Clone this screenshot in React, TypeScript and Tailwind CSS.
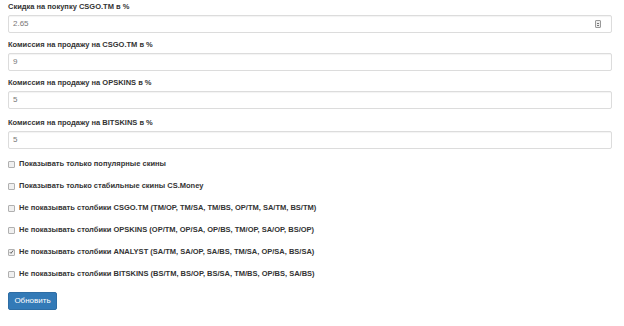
import { useState } from "react";

const FIELDS = [
  { label: "Скидка на покупку CSGO.TM в %", value: "2.65", spinner: true, gap: "mb-[7px]" },
  { label: "Комиссия на продажу на CSGO.TM в %", value: "9", gap: "mb-[7px]" },
  { label: "Комиссия на продажу на OPSKINS в %", value: "5", gap: "mb-[9px]" },
  { label: "Комиссия на продажу на BITSKINS в %", value: "5", gap: "mb-[7px]" },
];

const CHECKS = [
  { label: "Показывать только популярные скины", checked: false },
  { label: "Показывать только стабильные скины CS.Money", checked: false },
  { label: "Не показывать столбики CSGO.TM (TM/OP, TM/SA, TM/BS, OP/TM, SA/TM, BS/TM)", checked: false },
  { label: "Не показывать столбики OPSKINS (OP/TM, OP/SA, OP/BS, TM/OP, SA/OP, BS/OP)", checked: false },
  { label: "Не показывать столбики ANALYST (SA/TM, SA/OP, SA/BS, TM/SA, OP/SA, BS/SA)", checked: true },
  { label: "Не показывать столбики BITSKINS (BS/TM, BS/OP, BS/SA, TM/BS, OP/BS, SA/BS)", checked: false },
];

function Checkbox({ checked }: { checked: boolean }) {
  return (
    <span className="mr-[4px] flex h-[7px] w-[7px] shrink-0 items-center justify-center rounded-[1px] border border-[#b0b0b0] bg-[#f0f0f0]">
      {checked && (
        <svg width="6" height="6" viewBox="0 0 6 6" aria-hidden>
          <path d="M1 3.2 L2.4 4.6 L5 1.2" fill="none" stroke="#444" strokeWidth="1" />
        </svg>
      )}
    </span>
  );
}

export default function App() {
  const [checks] = useState(CHECKS);

  return (
    <div className="min-h-[326px] w-[624px] bg-white pl-[8px] pr-[12px] pt-[2px] font-['Liberation_Sans',Arial,sans-serif] text-[#333]">
      {FIELDS.map((f) => (
        <div key={f.label} className={f.gap}>
          <div className="mb-[3px] h-[10px] text-[7.5px] font-bold leading-[10px]">{f.label}</div>
          <div className="flex h-[18px] items-center justify-between rounded-[2px] border border-[#dcdcdc] px-[4px] text-[8px] text-[#777] shadow-[inset_0_1px_1px_rgba(0,0,0,0.05)]">
            <span>{f.value}</span>
            {f.spinner && (
              <span className="mr-[6px] flex h-[8px] w-[6px] flex-col items-center justify-center rounded-[1px] border border-[#999] bg-[#eee]">
                <span className="h-[1px] w-[2px] bg-[#777]" />
                <span className="mt-[1px] h-[1px] w-[2px] bg-[#777]" />
              </span>
            )}
          </div>
        </div>
      ))}

      <div className="mt-[-3px]">
        {checks.map((c) => (
          <div key={c.label} className="flex h-[22px] items-center text-[7.5px] font-bold">
            <Checkbox checked={c.checked} />
            <span>{c.label}</span>
          </div>
        ))}
      </div>

      <button className="mt-[7px] flex h-[18px] w-[49px] items-center justify-center rounded-[2px] border border-[#2e6da4] bg-[#337ab7] text-[8px] text-white">
        Обновить
      </button>
    </div>
  );
}
